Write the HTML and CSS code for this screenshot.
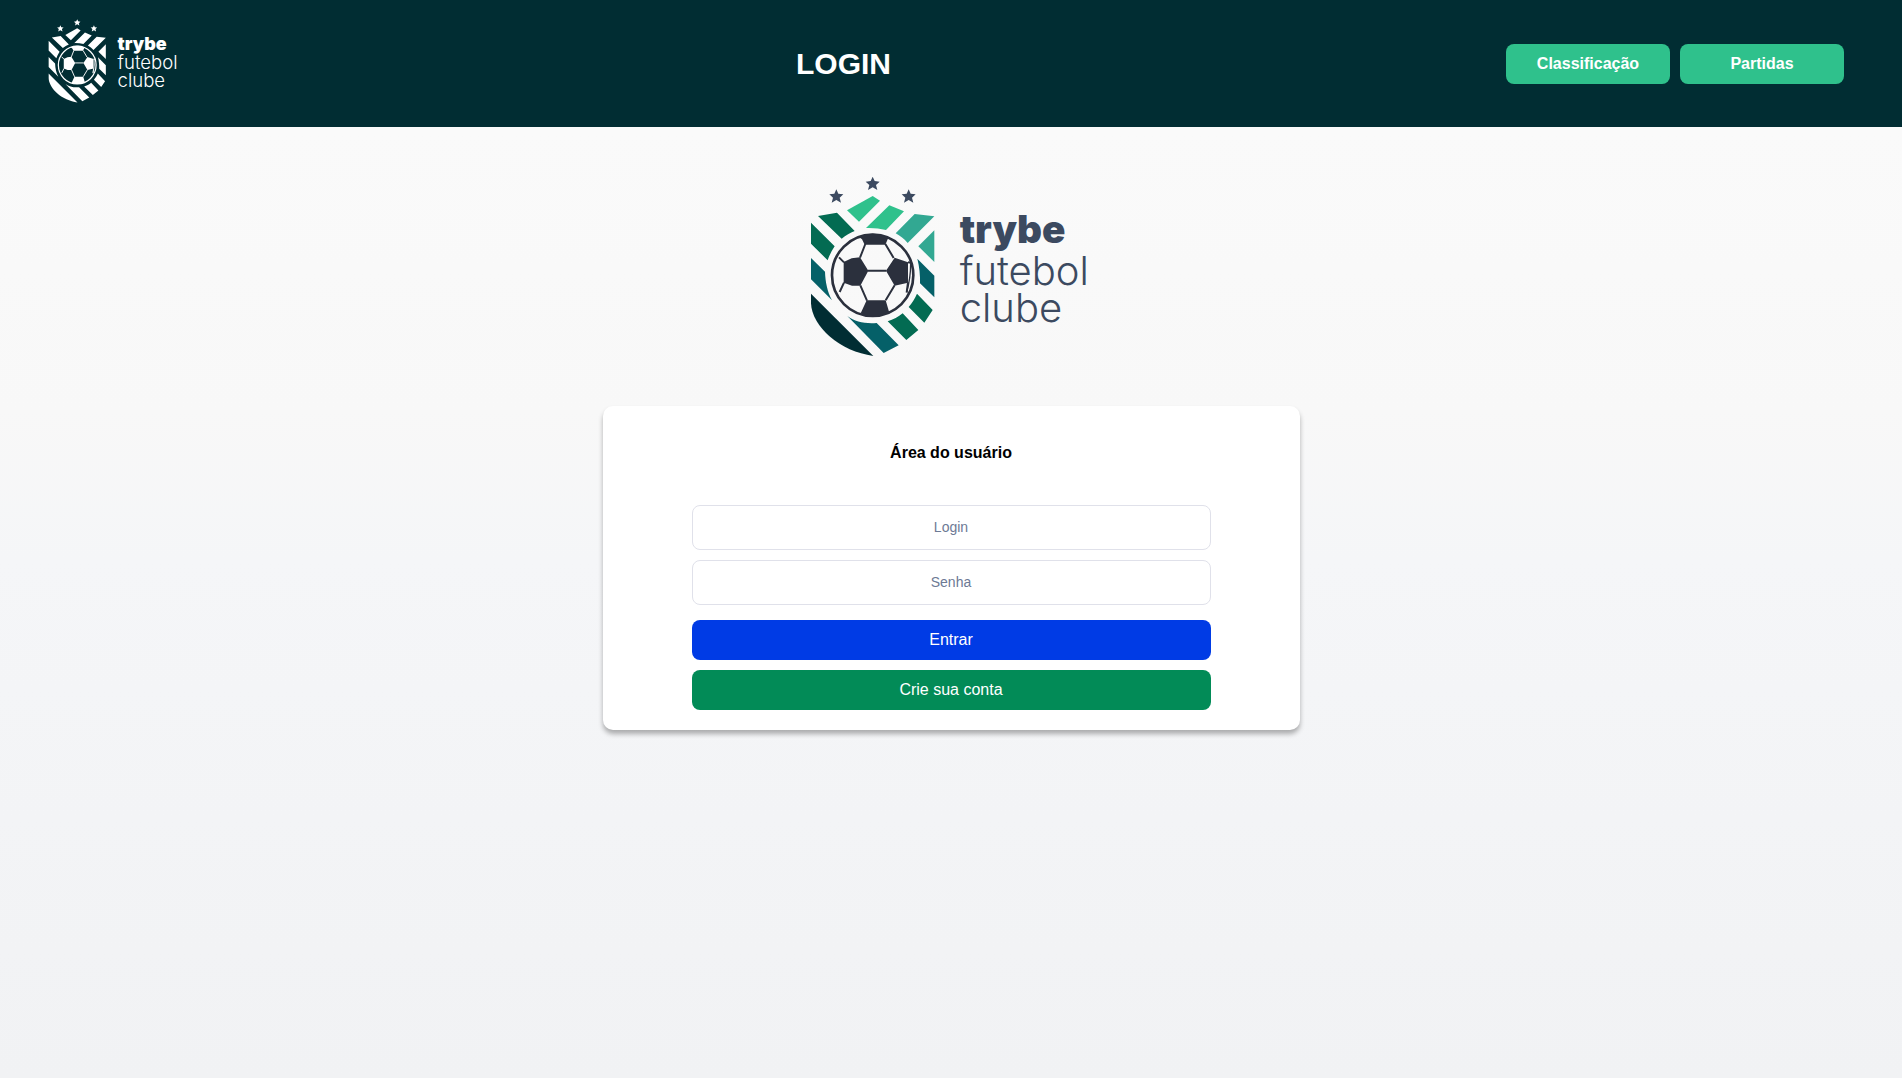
FILE: index.html
```html
<!DOCTYPE html>
<html lang="pt-BR">
<head>
<meta charset="utf-8">
<meta name="viewport" content="width=device-width, initial-scale=1">
<title>Trybe Futebol Clube</title>
<link rel="stylesheet" href="styles.css">
</head>
<body>
<svg class="sprite" aria-hidden="true">
  <symbol id="emblem" viewBox="30 18 376 543">
    <g class="stars">
      <path id="star" d="M218 20l6 13 15 2-11 10 4 15-14-8-14 8 4-15-11-10 15-2z"/>
      <use href="#star" x="-109" y="38"/>
      <use href="#star" x="108" y="38"/>
    </g>
    <g class="mint">
      <path d="M218 78 240 92 177 155 141 121z"/>
      <path d="M268 106 312 124 258 180C240 176 220 173 198 174z"/>
    </g>
    <g class="teal">
      <path d="M344 132 403 139 323 219C313 207 300 197 287 190z"/>
      <path d="M403 181V276L355 229z"/>
    </g>
    <g class="green">
      <path d="M54 138 111 128 164 183C150 188 138 196 125 206z"/>
      <path d="M33 158 104 229C95 242 88 256 83 271L33 221z"/>
      <path d="M263 454C280 449 295 441 308 430L355 480 319 510z"/>
      <path d="M351 371 398 420 373 458 326 411C336 400 345 385 351 371z"/>
    </g>
    <g class="petrol">
      <path d="M33 264 75 305C76 335 82 365 96 391L33 328z"/>
      <path d="M142 438C165 455 195 462 230 459L296 526 251 549z"/>
      <path d="M352 266 403 317V382L360 340C361 315 358 290 352 266z"/>
    </g>
    <path class="night" d="M33 371 220 558C120 545 36 470 33 400z"/>
    <g class="ball">
      <circle class="seam" cx="218" cy="316" r="122" stroke-width="8"/>
      <path d="M176 200C204 188 236 188 265 203L256 224H194L186 208zM200 391H257L268 428C240 441 206 441 182 430zM131 276 155 265 180 262 205 302 181 347 156 347 131 338zM284 263 324 277V338L284 347 258 302z"/>
      <path class="seam" stroke-width="6" d="M196 222 180 263M256 222 281 264M204 302H259M181 346 201 392M284 346 257 391M132 277 117 262M132 338 119 366M324 277 336 279M324 337 320 368"/>
      <path class="seam" stroke-width="4" d="M332 280Q332 325 320 366"/>
    </g>
  </symbol>
</svg>

<header class="topbar">
  <svg class="logo logo-light" viewBox="30 18 858 543" role="img" aria-label="Trybe Futebol Clube">
    <use href="#emblem" x="30" y="18" width="376" height="543"/>
    <text class="name" x="479" y="220">trybe</text>
    <text class="club" x="479" y="344">futebol</text>
    <text class="club" x="479" y="456">clube</text>
  </svg>
  <h1 class="page-title">LOGIN</h1>
  <nav class="links">
    <button class="nav-button" type="button">Classificação</button>
    <button class="nav-button" type="button">Partidas</button>
  </nav>
</header>

<main class="content">
  <svg class="logo logo-color" viewBox="30 18 846 543" role="img" aria-label="Trybe Futebol Clube">
    <use href="#emblem" x="30" y="18" width="376" height="543"/>
    <text class="name" x="479" y="220">trybe</text>
    <text class="club" x="479" y="344">futebol</text>
    <text class="club" x="479" y="456">clube</text>
  </svg>
  <form class="card">
    <h2 class="card-title">Área do usuário</h2>
    <div class="fields">
      <input class="field" type="text" placeholder="Login" aria-label="Login">
      <input class="field" type="password" placeholder="Senha" aria-label="Senha">
    </div>
    <div class="actions">
      <button class="action enter" type="button">Entrar</button>
      <button class="action register" type="button">Crie sua conta</button>
    </div>
  </form>
</main>
</body>
</html>
```
FILE: styles.css
```css
* {
  box-sizing: border-box;
}

body {
  display: flex;
  flex-direction: column;
  min-height: 100vh;
  margin: 0;
  background: linear-gradient(#fafafa 12%, #f8f8f8 38%, #f5f6f8 52%, #f1f2f4);
  font-family: "Liberation Sans", Arial, sans-serif;
}

button,
input {
  font-family: inherit;
}

.sprite {
  position: absolute;
  width: 0;
  height: 0;
}

.topbar {
  display: flex;
  align-items: center;
  justify-content: space-between;
  padding: 19px 58px 19px 48px;
  background: #012d33;
}

.logo {
  --ink: #3c4a60;
  --ball: #2b303d;
  --mint: #2fc18c;
  --teal: #32a892;
  --green: #036b52;
  --petrol: #056068;
  --night: #012d33;
  display: block;
}

.logo-light {
  --ink: #fff;
  --ball: #fff;
  --mint: #fff;
  --teal: #fff;
  --green: #fff;
  --petrol: #fff;
  --night: #fff;
  width: 133px;
  height: 84px;
  margin-bottom: 5px;
}

.logo-color {
  width: 282px;
  height: 181px;
}

.stars { fill: var(--ink); }
.mint { fill: var(--mint); }
.teal { fill: var(--teal); }
.green { fill: var(--green); }
.petrol { fill: var(--petrol); }
.night { fill: var(--night); }
.ball { fill: var(--ball); }

.seam {
  fill: none;
  stroke: var(--ball);
}

.name,
.club {
  fill: var(--ink);
  font-family: Inter, sans-serif;
}

.name {
  font-size: 116px;
  font-weight: 900;
}

.club {
  font-size: 120px;
  font-weight: 300;
}

.page-title {
  margin: 0;
  color: #fff;
  font-size: 30px;
  line-height: 40px;
}

.links {
  display: flex;
  gap: 10px;
}

.nav-button {
  width: 164px;
  height: 40px;
  border: 0;
  border-radius: 8px;
  background: #2fc18c;
  color: #fff;
  font-size: 16px;
  font-weight: 700;
}

.content {
  display: flex;
  flex-direction: column;
  align-items: center;
  gap: 49px;
  padding: 49px 20px;
}

.card {
  display: flex;
  flex-direction: column;
  align-items: center;
  width: 100%;
  max-width: 697px;
  padding: 37px 89px 20px;
  border-radius: 10px;
  background: #fff;
  box-shadow: 0 4px 5px rgba(0, 0, 0, 0.3);
}

.card-title {
  margin: 0 0 42px;
  font-size: 16px;
  line-height: 20px;
}

.fields,
.actions {
  display: flex;
  flex-direction: column;
  gap: 10px;
  width: 100%;
}

.field {
  height: 45px;
  padding: 0 2px 2px;
  border: 1px solid #e0e1ea;
  border-radius: 8px;
  background: #fff;
  font-size: 14px;
  text-align: center;
}

.field::placeholder {
  color: #6d7a95;
}

.actions {
  margin-top: 15px;
}

.action {
  height: 40px;
  border: 0;
  border-radius: 8px;
  color: #fff;
  font-size: 16px;
}

.enter { background: #003be5; }
.register { background: #028b57; }
```
